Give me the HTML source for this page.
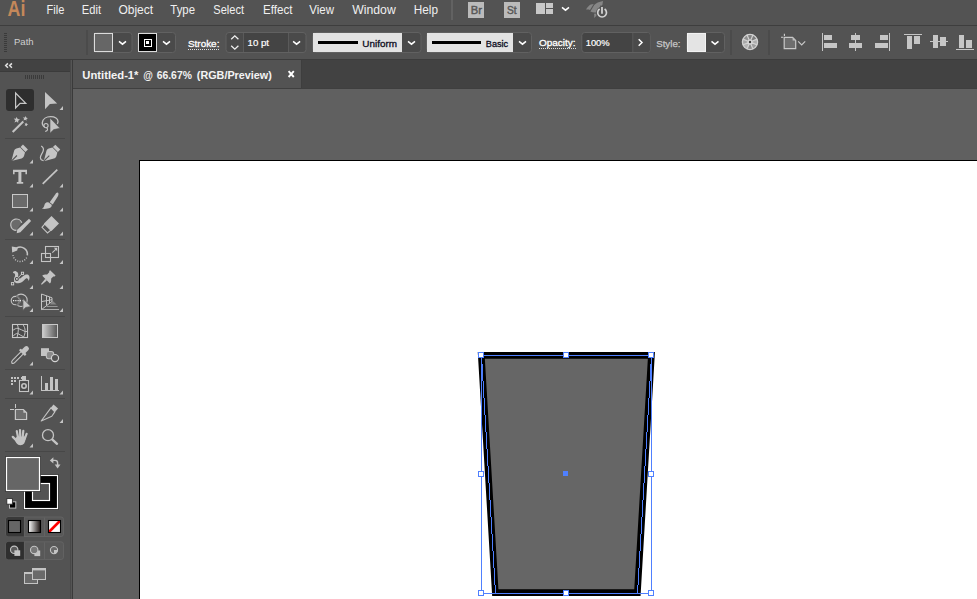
<!DOCTYPE html>
<html>
<head>
<meta charset="utf-8">
<title>Untitled-1* @ 66.67% (RGB/Preview)</title>
<style>
html,body{margin:0;padding:0;background:#535353;overflow:hidden;}
body{width:977px;height:599px;position:relative;font-family:"Liberation Sans",sans-serif;}
svg{position:absolute;left:0;top:0;display:block;}
text{font-family:"Liberation Sans",sans-serif;}
</style>
</head>
<body>
<svg width="977" height="599" viewBox="0 0 977 599">
<defs>
  <path id="tri" d="M3.5 0V4H0Z" fill="#c4c4c4"/>
  <path id="chev" d="M-3.5 -1.1L0 1.7L3.5 -1.1" fill="none" stroke="#ffffff" stroke-width="1.5"/>
  <linearGradient id="gradTool" x1="0" x2="1" y1="0" y2="0"><stop offset="0" stop-color="#cfcfcf"/><stop offset="1" stop-color="#555555"/></linearGradient>
  <linearGradient id="gradMode" x1="0" x2="1" y1="0" y2="0"><stop offset="0" stop-color="#ffffff"/><stop offset="1" stop-color="#1a1210"/></linearGradient>
</defs>

<!-- ===== BACKGROUNDS ===== -->
<g id="bg" shape-rendering="crispEdges">
  <rect x="0" y="0" width="977" height="599" fill="#535353"/>
  <!-- menu/control separator -->
  <rect x="0" y="25" width="977" height="1" fill="#3e3e3e"/>
  <!-- line under control bar -->
  <rect x="0" y="59" width="977" height="1" fill="#3c3c3c"/>
  <!-- canvas -->
  <rect x="73" y="89" width="904" height="510" fill="#606060"/>
  <!-- tab strip -->
  <rect x="73" y="60" width="904" height="28" fill="#424242"/>
  <rect x="73" y="60" width="228" height="28" fill="#535353"/>
  <rect x="73" y="88" width="904" height="1" fill="#3f3f3f"/>
  <!-- toolbar right edge -->
  <rect x="70" y="60" width="1" height="539" fill="#484848"/>
  <rect x="71" y="60" width="1" height="539" fill="#555555"/>
  <rect x="72" y="60" width="1" height="539" fill="#3a3a3a"/>
  <!-- toolbar header -->
  <rect x="0" y="60" width="70" height="11" fill="#424242"/>
  <rect x="0" y="71" width="70" height="1" fill="#3b3b3b"/>
  <!-- artboard -->
  <rect x="139" y="160" width="838" height="439" fill="#000000"/>
  <rect x="140" y="161" width="837" height="438" fill="#ffffff"/>
</g>

<!-- ===== MENU BAR ===== -->
<g id="menubar">
  <text x="7.6" y="16" font-size="22.5" font-weight="bold" fill="#c4885a" textLength="17.8" lengthAdjust="spacingAndGlyphs">Ai</text>
  <g font-size="12" fill="#f0f0f0">
    <text x="46.5" y="13.5" textLength="17.8" lengthAdjust="spacingAndGlyphs">File</text>
    <text x="81.8" y="13.5" textLength="19.2" lengthAdjust="spacingAndGlyphs">Edit</text>
    <text x="118.4" y="13.5" textLength="34.7" lengthAdjust="spacingAndGlyphs">Object</text>
    <text x="170.3" y="13.5" textLength="24.7" lengthAdjust="spacingAndGlyphs">Type</text>
    <text x="213.3" y="13.5" textLength="30.8" lengthAdjust="spacingAndGlyphs">Select</text>
    <text x="263" y="13.5" textLength="29.5" lengthAdjust="spacingAndGlyphs">Effect</text>
    <text x="309.3" y="13.5" textLength="24.7" lengthAdjust="spacingAndGlyphs">View</text>
    <text x="352.3" y="13.5" textLength="43.4" lengthAdjust="spacingAndGlyphs">Window</text>
    <text x="413.8" y="13.5" textLength="24.2" lengthAdjust="spacingAndGlyphs">Help</text>
  </g>
  <rect x="451" y="0" width="2" height="20" fill="#626262" shape-rendering="crispEdges"/>
  <!-- Br -->
  <rect x="468" y="2" width="16" height="16" fill="#bbbbbb" shape-rendering="crispEdges"/>
  <text x="470.7" y="14" font-size="11" fill="#575757" stroke="#575757" stroke-width="0.45" textLength="11.2" lengthAdjust="spacingAndGlyphs">Br</text>
  <!-- St -->
  <rect x="504" y="2" width="16" height="16" fill="#bbbbbb" shape-rendering="crispEdges"/>
  <text x="506.9" y="14" font-size="11" fill="#575757" stroke="#575757" stroke-width="0.45" textLength="9.6" lengthAdjust="spacingAndGlyphs">St</text>
  <!-- workspace -->
  <g fill="#c8c8c8" shape-rendering="crispEdges">
    <rect x="536" y="3" width="9" height="11"/>
    <rect x="546" y="3" width="7" height="5"/>
    <rect x="546" y="9" width="7" height="5"/>
  </g>
  <use href="#chev" x="565.5" y="8.5"/>
  <!-- rocket / gpu -->
  <g>
    <path d="M603 0.9C599 1.6 596 3 594.2 5L590.4 11.6C592.4 12.6 594.6 12.8 596.8 12.4C600.6 9.6 602.8 5.6 603 0.9Z" fill="#868686"/>
    <path d="M586 9.6C587.6 7 589 5.4 590.8 4.5L593.7 4.1L590 9.9C588.6 9.4 587.4 9.4 586 9.6Z" fill="#868686"/>
    <path d="M594.1 13.7L596.7 13.4C596.8 14.4 596.6 15.2 596.3 16L593.9 18.1C594.4 16.6 594.4 15.2 594.1 13.7Z" fill="#868686"/>
    <circle cx="602.1" cy="12.7" r="6.1" fill="#535353"/>
    <path d="M602 5.6V14.6" stroke="#535353" stroke-width="3.8"/>
    <path d="M599.6 9A4.4 4.4 0 1 0 604.6 9" fill="none" stroke="#d2d2d2" stroke-width="1.7"/>
    <path d="M602 7.1V13.8" stroke="#d2d2d2" stroke-width="1.8"/>
  </g>
</g>

<!-- ===== CONTROL BAR ===== -->
<g id="controlbar">
  <!-- grip -->
  <g fill="#3a3a3a" shape-rendering="crispEdges">
    <rect x="4" y="33" width="3" height="1"/><rect x="4" y="35" width="3" height="1"/><rect x="4" y="37" width="3" height="1"/>
    <rect x="4" y="39" width="3" height="1"/><rect x="4" y="41" width="3" height="1"/><rect x="4" y="43" width="3" height="1"/>
    <rect x="4" y="45" width="3" height="1"/><rect x="4" y="47" width="3" height="1"/><rect x="4" y="49" width="3" height="1"/>
    <rect x="4" y="51" width="3" height="1"/>
  </g>
  <text x="14" y="44.8" font-size="9.6" fill="#d0d0d0" textLength="19.6" lengthAdjust="spacingAndGlyphs">Path</text>
  <rect x="86" y="30" width="2" height="25" fill="#4b4b4b" shape-rendering="crispEdges"/>

  <!-- fill swatch + dropdown -->
  <rect x="93.5" y="32.5" width="38.5" height="20" rx="3" fill="#4a4a4a" stroke="#616161" stroke-width="1"/>
  <rect x="94.5" y="33.5" width="18" height="18" fill="#666666" stroke="#dcdcdc" stroke-width="1"/>
  <use href="#chev" x="122.5" y="42.5"/>

  <!-- stroke swatch + dropdown -->
  <rect x="138.0" y="32.5" width="37.5" height="20" rx="3" fill="#4a4a4a" stroke="#616161" stroke-width="1"/>
  <rect x="138.5" y="33.5" width="18" height="18" fill="#000000" stroke="#dcdcdc" stroke-width="1"/>
  <rect x="144" y="39" width="7" height="7" fill="none" stroke="#ffffff" stroke-width="1" shape-rendering="crispEdges"/>
  <rect x="146" y="41" width="3" height="3" fill="#ffffff" shape-rendering="crispEdges"/>
  <use href="#chev" x="166.5" y="42.5"/>

  <!-- Stroke label -->
  <text x="188" y="47" font-size="9.7" fill="#ffffff" stroke="#ffffff" stroke-width="0.3" textLength="31.4" lengthAdjust="spacingAndGlyphs">Stroke:</text>
  <path d="M188 49.5H220" stroke="#e0e0e0" stroke-width="1" stroke-dasharray="1 1" shape-rendering="crispEdges"/>

  <!-- stroke weight spinner/field/dropdown -->
  <rect x="226" y="32.5" width="80" height="20" rx="3" fill="#4a4a4a" stroke="#616161" stroke-width="1"/>
  <rect x="244" y="33" width="44.5" height="19" fill="#444444"/>
  <path d="M243.5 33V52M288.5 33V52" stroke="#5c5c5c" stroke-width="0.9"/>
  <path d="M231.2 39.2L234.8 35.8L238.4 39.2M231.2 45.8L234.8 49.2L238.4 45.8" fill="none" stroke="#f0f0f0" stroke-width="1.3"/>
  <text x="247.5" y="46" font-size="9.7" fill="#ffffff" stroke="#ffffff" stroke-width="0.2" textLength="21.5" lengthAdjust="spacingAndGlyphs">10 pt</text>
  <use href="#chev" x="296.6" y="42.5"/>

  <!-- Uniform -->
  <rect x="312.5" y="32.5" width="108.5" height="20" rx="3" fill="#4a4a4a" stroke="#616161" stroke-width="1"/>
  <rect x="313" y="33" width="89" height="19" fill="#e3e3e3" shape-rendering="crispEdges"/>
  <rect x="318" y="41" width="40" height="3" fill="#000000" shape-rendering="crispEdges"/>
  <text x="362.3" y="47" font-size="9.7" fill="#0c0c1c" stroke="#0c0c1c" stroke-width="0.3" textLength="34.7" lengthAdjust="spacingAndGlyphs">Uniform</text>
  <use href="#chev" x="411.5" y="42.5"/>

  <!-- Basic -->
  <rect x="426.5" y="32.5" width="105" height="20" rx="3" fill="#4a4a4a" stroke="#616161" stroke-width="1"/>
  <rect x="427" y="33" width="86" height="19" fill="#e3e3e3" shape-rendering="crispEdges"/>
  <rect x="432" y="41" width="49" height="3" fill="#000000" shape-rendering="crispEdges"/>
  <text x="485.8" y="47" font-size="9.7" fill="#0c0c1c" stroke="#0c0c1c" stroke-width="0.3" textLength="22.4" lengthAdjust="spacingAndGlyphs">Basic</text>
  <use href="#chev" x="522.5" y="42.5"/>

  <!-- Opacity -->
  <text x="539" y="46" font-size="9.7" fill="#ffffff" stroke="#ffffff" stroke-width="0.3" textLength="36.6" lengthAdjust="spacingAndGlyphs">Opacity:</text>
  <path d="M539 48.5H576" stroke="#e0e0e0" stroke-width="1" stroke-dasharray="1 1" shape-rendering="crispEdges"/>
  <rect x="581.8" y="32.5" width="68.4" height="20" rx="3" fill="#444444" stroke="#616161" stroke-width="1"/>
  <path d="M633 33H647.2A2.5 2.5 0 0 1 649.7 35.5V49.5A2.5 2.5 0 0 1 647.2 52H633Z" fill="#4a4a4a"/>
  <path d="M632.8 33V52" stroke="#5c5c5c" stroke-width="0.9"/>
  <text x="585.7" y="46" font-size="9.7" fill="#ffffff" stroke="#ffffff" stroke-width="0.2" textLength="24" lengthAdjust="spacingAndGlyphs">100%</text>
  <path d="M638.7 39.2L642 42.5L638.7 45.8" fill="none" stroke="#ffffff" stroke-width="1.5"/>

  <!-- Style -->
  <text x="656.2" y="47" font-size="9.7" fill="#c8c8c8" stroke="#c8c8c8" stroke-width="0.25" textLength="24.3" lengthAdjust="spacingAndGlyphs">Style:</text>
  <rect x="686.5" y="32.5" width="38" height="20" rx="3" fill="#4a4a4a" stroke="#616161" stroke-width="1"/>
  <rect x="687.5" y="33.5" width="18" height="18" fill="#e4e4e4" stroke="#f2f2f2" stroke-width="1" shape-rendering="crispEdges"/>
  <use href="#chev" x="715" y="42.5"/>
  <rect x="730" y="30" width="2" height="25" fill="#4b4b4b" shape-rendering="crispEdges"/>

  <!-- recolor wheel -->
  <g>
    <path d="M750 42L757.02 39.09A7.6 7.6 0 0 1 757.02 44.91Z" fill="#adadad"/>
    <path d="M750 42L757.02 44.91A7.6 7.6 0 0 1 752.91 49.02Z" fill="#9c9c9c"/>
    <path d="M750 42L752.91 49.02A7.6 7.6 0 0 1 747.09 49.02Z" fill="#8c8c8c"/>
    <path d="M750 42L747.09 49.02A7.6 7.6 0 0 1 742.98 44.91Z" fill="#b2b2b2"/>
    <path d="M750 42L742.98 44.91A7.6 7.6 0 0 1 742.98 39.09Z" fill="#a6a6a6"/>
    <path d="M750 42L742.98 39.09A7.6 7.6 0 0 1 747.09 34.98Z" fill="#8e8e8e"/>
    <path d="M750 42L747.09 34.98A7.6 7.6 0 0 1 752.91 34.98Z" fill="#808080"/>
    <path d="M750 42L752.91 34.98A7.6 7.6 0 0 1 757.02 39.09Z" fill="#7c7c7c"/>
    <path d="M750 42L757.02 44.91M750 42L752.91 49.02M750 42L747.09 49.02M750 42L742.98 44.91M750 42L742.98 39.09M750 42L747.09 34.98M750 42L752.91 34.98M750 42L757.02 39.09" stroke="#d2d2d2" stroke-width="1.2" fill="none"/>
    <circle cx="750" cy="42" r="7.6" fill="none" stroke="#d2d2d2" stroke-width="1.3"/>
    <circle cx="750" cy="42" r="2.6" fill="#d8d8d8"/>
    <circle cx="750" cy="42" r="1.2" fill="#3c3c3c"/>
  </g>
  <rect x="768" y="30" width="2" height="25" fill="#4b4b4b" shape-rendering="crispEdges"/>

  <!-- document setup / artboard icon -->
  <g>
    <path d="M784.2 37.3H792.6L795.7 40.4V48.6H784.2Z" fill="#6e6e6e" stroke="#c8c8c8" stroke-width="1.2"/>
    <path d="M792.6 37.3V40.4H795.7Z" fill="#c0c0c0"/>
    <path d="M781 37.3H783.2M784.4 33.8V36" stroke="#d0d0d0" stroke-width="1.1"/>
    <path d="M798.2 41.3L801.7 44.8L805.2 41.3" fill="none" stroke="#c8c8c8" stroke-width="1.2"/>
  </g>

  <!-- align icons -->
  <g fill="#c6c6c6" shape-rendering="crispEdges">
    <rect x="822" y="33" width="1" height="18"/><rect x="824" y="35" width="8" height="5"/><rect x="824" y="43" width="13" height="5"/>
    <rect x="855" y="33" width="1" height="18"/><rect x="851" y="35" width="9" height="5"/><rect x="849" y="43" width="13" height="5"/>
    <rect x="889" y="33" width="1" height="18"/><rect x="880" y="35" width="8" height="5"/><rect x="875" y="43" width="13" height="5"/>
    <rect x="904" y="34" width="18" height="1"/><rect x="907" y="36" width="5" height="13"/><rect x="914" y="36" width="6" height="8"/>
    <rect x="930" y="41" width="18" height="1"/><rect x="933" y="35" width="5" height="13"/><rect x="940" y="37" width="6" height="9"/>
    <rect x="956" y="49" width="18" height="1"/><rect x="959" y="35" width="5" height="13"/><rect x="966" y="40" width="6" height="8"/>
  </g>
</g>

<!-- ===== DOCUMENT TAB ===== -->
<g id="tab">
  <rect x="301" y="60" width="1" height="28" fill="#3e3e3e" shape-rendering="crispEdges"/>
  <g font-size="11" font-weight="bold" fill="#f4f4f4">
    <text x="82.3" y="78.8" textLength="56.2" lengthAdjust="spacingAndGlyphs">Untitled-1*</text>
    <text x="143.3" y="78.8" textLength="9.6" lengthAdjust="spacingAndGlyphs">@</text>
    <text x="156.7" y="78.8" textLength="35.2" lengthAdjust="spacingAndGlyphs">66.67%</text>
    <text x="196.8" y="78.8" textLength="75" lengthAdjust="spacingAndGlyphs">(RGB/Preview)</text>
  </g>
  <path d="M288.6 71.2L293.8 77M293.8 71.2L288.6 77" stroke="#ffffff" stroke-width="1.9" fill="none"/>
</g>

<!-- ===== TOOLBAR ===== -->
<g id="toolbar">
  <!-- collapse << -->
  <path d="M7.9 63.4L5.7 65.6L7.9 67.8M11.9 63.4L9.7 65.6L11.9 67.8" fill="none" stroke="#e0e0e0" stroke-width="1.5"/>
  <!-- grip -->
  <g fill="#3a3a3a" shape-rendering="crispEdges">
    <rect x="25" y="75" width="1" height="4"/><rect x="27" y="75" width="1" height="4"/><rect x="29" y="75" width="1" height="4"/>
    <rect x="31" y="75" width="1" height="4"/><rect x="33" y="75" width="1" height="4"/><rect x="35" y="75" width="1" height="4"/>
    <rect x="37" y="75" width="1" height="4"/><rect x="39" y="75" width="1" height="4"/><rect x="41" y="75" width="1" height="4"/>
    <rect x="43" y="75" width="1" height="4"/>
  </g>
  <!-- separators -->
  <g fill="#474747" shape-rendering="crispEdges">
    <rect x="5" y="138" width="60" height="1"/>
    <rect x="5" y="239" width="60" height="1"/>
    <rect x="5" y="316" width="60" height="1"/>
    <rect x="5" y="369" width="60" height="1"/>
    <rect x="5" y="398" width="60" height="1"/>
    <rect x="5" y="451" width="60" height="1"/>
  </g>
  <!-- flyout triangles -->
  <g>
    <use href="#tri" x="59.5" y="106"/>
    <use href="#tri" x="29.5" y="159.5"/>
    <use href="#tri" x="29.5" y="183.5"/><use href="#tri" x="59.5" y="183.5"/>
    <use href="#tri" x="29.5" y="207.5"/><use href="#tri" x="59.5" y="207.5"/>
    <use href="#tri" x="29.5" y="231.5"/><use href="#tri" x="59.5" y="231.5"/>
    <use href="#tri" x="29.5" y="260"/><use href="#tri" x="59.5" y="260"/>
    <use href="#tri" x="29.5" y="285"/><use href="#tri" x="59.5" y="285"/>
    <use href="#tri" x="29.5" y="308"/><use href="#tri" x="59.5" y="308"/>
    <use href="#tri" x="29.5" y="361.5"/>
    <use href="#tri" x="29.5" y="390.5"/><use href="#tri" x="59.5" y="390.5"/>
    <use href="#tri" x="59.5" y="419"/>
    <use href="#tri" x="29.5" y="443.5"/>
  </g>

  <!-- 1 selection (active) -->
  <rect x="6" y="89" width="28" height="22" rx="3" fill="#2e2e2e"/>
  <path d="M15.6 93V108L20.1 103.4H25.8Z" fill="none" stroke="#c8c8c8" stroke-width="1.2" stroke-linejoin="miter"/>
  <!-- 2 direct selection -->
  <path d="M45 92V109.2L49.9 103.9L57.2 103.4Z" fill="#c4c4c4"/>

  <!-- 3 magic wand -->
  <path d="M12.7 132.1L23.3 121.6" stroke="#c4c4c4" stroke-width="2.1"/>
  <g fill="#c4c4c4">
    <path d="M16.4 117L17.8 119L20 119.4L18.2 120.8L18.2 123L16.8 121.6L14.4 122.6L15.4 120.4L13.8 118.6L15.8 118.8Z"/>
    <path d="M25.6 116L26.2 117.6L27.8 118.2L26.4 119.2L26.6 120.8L25.2 119.8L23.4 120.6L24.2 118.8L22.8 117.4L24.8 117.4Z"/>
    <path d="M26 122.6L26.8 123.8L28.2 124.2L27 125L27 126.2L26 125.4L24.6 125.8L25.2 124.6L24.6 123.4L25.8 123.6Z"/>
  </g>
  <!-- 4 lasso + arrow -->
  <path d="M44.6 127C43 126 42.1 124.4 42.3 122.6C42.8 119 46.4 116.7 50.6 116.7C55 116.7 58 118.8 58 121.4C58 122.4 57.7 123.2 57.2 123.8" fill="none" stroke="#c4c4c4" stroke-width="1.3"/>
  <circle cx="46" cy="125.6" r="2.1" fill="none" stroke="#c4c4c4" stroke-width="1.1"/>
  <path d="M46.6 127.8C48.2 129 48 130.6 45.2 131.6" fill="none" stroke="#c4c4c4" stroke-width="1.1"/>
  <path d="M50 118V133.2L53.8 129.6L60 128.3Z" fill="#c4c4c4" stroke="#535353" stroke-width="0.6"/>

  <!-- 5 pen -->
  <g transform="translate(18.65 153.8) rotate(45)" fill="#c4c4c4">
    <rect x="-3.5" y="-9.6" width="7" height="3.4"/>
    <path d="M-3.5 -5.5H3.5L5.4 -2.2C6 -1 5.9 0.2 5.3 1.2L0.5 9.4H-0.5L-5.3 1.2C-5.9 0.2 -6 -1 -5.4 -2.2Z"/>
    <path d="M0 9.6V2.4" stroke="#535353" stroke-width="1.1"/>
  </g>
  <!-- 6 curvature -->
  <g transform="translate(51 153.9) rotate(45)" fill="#c4c4c4">
    <rect x="-3.5" y="-9.6" width="7" height="3.4"/>
    <path d="M-3.5 -5.5H3.5L5.4 -2.2C6 -1 5.9 0.2 5.3 1.2L0.5 9.4H-0.5L-5.3 1.2C-5.9 0.2 -6 -1 -5.4 -2.2Z"/>
    <path d="M0 9.6V2.4" stroke="#535353" stroke-width="1.1"/>
  </g>
  <path d="M41.2 146.1C43.4 147.4 44 149.2 43 151.6C42 154 40.2 155.6 40.4 157.8C40.6 159.6 41.8 160.5 43.6 160.6" fill="none" stroke="#c4c4c4" stroke-width="1.2"/>

  <!-- 7 type -->
  <path d="M13 169.8H27V174.3H25.4V172.1H21.4V182.1H23.2V183.8H16.8V182.1H18.4V172.1H14.6V174.3H13Z" fill="#c4c4c4"/>
  <!-- 8 line -->
  <path d="M42.7 183.8L57.3 169.6" stroke="#c4c4c4" stroke-width="1.7"/>

  <!-- 9 rectangle -->
  <rect x="12.5" y="194.5" width="15" height="13" fill="#6a6a6a" stroke="#c8c8c8" stroke-width="1"/>
  <!-- 10 paintbrush -->
  <path d="M57.6 192.6C58.8 193 58.7 194.8 57.9 196.2L52.7 204.4L49.7 202.2L55.4 194.2C56 193.2 56.8 192.4 57.6 192.6Z" fill="#c4c4c4"/>
  <path d="M48.7 202.5L51.7 204.8C52.3 207.8 48.6 209.3 41.8 208.8C44.4 207.6 44.1 205.4 44.9 203.8C45.7 202.3 47.5 201.8 48.7 202.5Z" fill="#c4c4c4"/>

  <!-- 11 shaper -->
  <path d="M16.4 230.4A5.7 5.7 0 1 1 21.6 222.4L17 229.6Z" fill="#6b6b6b"/>
  <path d="M16.4 230.4A5.7 5.7 0 1 1 21.8 222.8" fill="none" stroke="#c4c4c4" stroke-width="1.2"/>
  <path d="M29 218.8L31.1 221L20.4 232.3L16.7 233.2L17.2 229.8Z" fill="#c4c4c4"/>
  <!-- 12 eraser -->
  <path d="M44.7 224.1L42 227.3L47.5 232.9L50.8 230.2Z" fill="#535353" stroke="#c4c4c4" stroke-width="1.1"/>
  <path d="M51.5 216L59 223.5L51.5 231L44 223.5Z" fill="#c4c4c4"/>

  <!-- 13 rotate -->
  <path d="M16.6 248A7.2 7.2 0 0 1 27.3 255.4" fill="none" stroke="#c4c4c4" stroke-width="1.6"/>
  <path d="M26.6 257.6A7.2 7.2 0 0 1 13 254.6" fill="none" stroke="#c4c4c4" stroke-width="1.3" stroke-dasharray="1 1.45"/>
  <path d="M11.8 246.6L17.8 247.6L17.2 250.4L12.2 252.4Z" fill="#c4c4c4"/>
  <!-- 14 scale -->
  <g fill="none" stroke="#c4c4c4" stroke-width="1.1">
    <rect x="45.5" y="246.5" width="13" height="11"/>
    <rect x="41.5" y="253.5" width="9" height="8"/>
    <path d="M52.3 252.7L56.3 248.8"/>
  </g>
  <path d="M53.8 247.8H57.2V251.2Z" fill="#c4c4c4"/>
</g>
<g id="toolbar2">
  <!-- 15 width tool -->
  <path d="M13 273C13 271.6 14.4 270.8 15.8 271.2C17.8 271.8 18.6 273.4 18.2 275.4C17.8 277.2 17 278.6 17.4 279.8C19.6 279.4 21.4 277.4 23.6 275.8C25.2 274.6 27 274 28.2 274.8C29.8 275.8 30 278.2 28.7 281C28.3 279.2 27.6 278 26.4 278.2C24.8 278.6 23.6 281.4 21.2 282.6C18.6 283.8 15.4 283.4 14.4 281.4C13.6 279.6 14.6 277.6 15 276C15.4 274.6 15 273.2 13 273Z" fill="#c4c4c4"/>
  <path d="M12.6 283.6L22.4 273.4" stroke="#c4c4c4" stroke-width="0.9"/>
  <circle cx="16.9" cy="278.9" r="2.6" fill="#c8c8c8"/>
  <circle cx="16.9" cy="278.9" r="2" fill="#454545"/>
  <circle cx="16.9" cy="278.9" r="0.85" fill="#e8e8e8"/>
  <rect x="11.4" y="282.6" width="2.3" height="2.3" fill="#535353" stroke="#d0d0d0" stroke-width="0.9"/>
  <rect x="21.4" y="272.2" width="2.2" height="2.2" fill="#535353" stroke="#d0d0d0" stroke-width="0.9"/>
  <!-- 16 puppet pin -->
  <g transform="translate(47.05 278.65) rotate(45)" fill="#c4c4c4">
    <path d="M-3.85 -8.2H3.85V-6.9L2.9 -6V-3C3.7 -2 5 -1 5.4 0.2V1.4H-5.4V0.2C-5 -1 -3.7 -2 -2.9 -3V-6L-3.85 -6.9Z"/>
    <path d="M-1.1 1.4H1.1L0.55 8H-0.55Z"/>
  </g>

  <!-- 17 shape builder -->
  <circle cx="21" cy="300.3" r="6.2" fill="none" stroke="#c4c4c4" stroke-width="1.1"/>
  <circle cx="15.4" cy="300.6" r="4.2" fill="#535353" stroke="#c4c4c4" stroke-width="1.1"/>
  <path d="M16.2 296.4A4.2 4.2 0 0 1 16.2 304.8" fill="none" stroke="#535353" stroke-width="1.6"/>
  <path d="M16.2 296.4A4.2 4.2 0 0 1 16.2 304.8" fill="none" stroke="#8c8c8c" stroke-width="0.9"/>
  <path d="M13 300.6H22.6" stroke="#e8e8e8" stroke-width="1.2" stroke-dasharray="1.2 1.05"/>
  <path d="M22.9 298.6V310.4L25.7 307.4L30.9 306.6Z" fill="#c4c4c4" stroke="#535353" stroke-width="0.7"/>
  <!-- 18 perspective grid -->
  <path d="M52.6 300.8L56.6 304.6H50Z" fill="#858585"/>
  <g stroke-width="0.9">
    <path d="M46.8 306.5H57.6" stroke="#9e9e9e"/>
    <path d="M41.5 309.5H59" stroke="#b8b8b8"/>
  </g>
  <g fill="none" stroke="#c4c4c4" stroke-width="1">
    <path d="M41.5 294L52 297.8V301.4L41.5 309.6Z"/>
    <path d="M46.5 295.9V305.6M49.5 297V303.2M41.5 301.6L52 299.7"/>
  </g>

  <!-- 19 mesh -->
  <rect x="12.5" y="324.5" width="15" height="13" fill="#4a4a4a" stroke="#c8c8c8" stroke-width="1.1"/>
  <g fill="none" stroke="#c4c4c4" stroke-width="1">
    <path d="M17.3 324.5C18.7 327.5 18.7 331.5 17 337.4"/>
    <path d="M22.8 324.5C25.7 328 25.9 333 23.4 337.4"/>
    <path d="M12.6 330.6C14.5 329 16 328.3 17.9 328.3C20 329.2 23 330.4 25.2 331.5H27.4"/>
    <path d="M12.8 336.4C14.4 334.6 15.8 333.6 17.6 333.4C19.6 334.6 21.4 335.8 23.6 336.8"/>
  </g>
  <!-- 20 gradient -->
  <rect x="42.5" y="324.5" width="15" height="13" fill="url(#gradTool)" stroke="#c8c8c8" stroke-width="1"/>

  <!-- 21 eyedropper -->
  <g transform="translate(19.85 355.15) rotate(45)">
    <path d="M-1.6 -3V8.6C-1.6 10.2 -0.9 11 0 11.3C0.9 11 1.6 10.2 1.6 8.6V-3" fill="#535353" stroke="#c4c4c4" stroke-width="1.1"/>
    <path d="M0 -1V4" stroke="#454545" stroke-width="1.2"/>
    <rect x="-4.2" y="-5.4" width="8.4" height="2.6" rx="0.8" fill="#c4c4c4"/>
    <rect x="-2.5" y="-11.75" width="5" height="8" rx="2.4" fill="#c4c4c4"/>
  </g>
  <!-- 22 blend -->
  <rect x="41" y="348.2" width="8" height="7.8" fill="#c4c4c4"/>
  <rect x="46.3" y="351.5" width="7.4" height="7.2" rx="2.4" fill="#8a8a8a" stroke="#c4c4c4" stroke-width="1.1"/>
  <circle cx="55" cy="358.1" r="3.6" fill="#535353" stroke="#d4d4d4" stroke-width="1.2"/>

  <!-- 23 symbol sprayer -->
  <g fill="#c4c4c4" shape-rendering="crispEdges">
    <rect x="11" y="377" width="2" height="2"/><rect x="14" y="377" width="2" height="2"/><rect x="17" y="377" width="2" height="2"/>
    <rect x="11" y="380" width="2" height="2"/><rect x="14" y="380" width="2" height="2"/>
    <rect x="11" y="383" width="2" height="2"/>
    <rect x="22" y="376" width="4" height="5"/><rect x="21" y="377" width="2" height="2"/>
  </g>
  <rect x="19.5" y="380.5" width="9" height="11" fill="#4a4a4a" stroke="#c4c4c4" stroke-width="1.1"/>
  <circle cx="24" cy="386" r="2.2" fill="none" stroke="#c4c4c4" stroke-width="1.6"/>
  <!-- 24 column graph -->
  <g fill="#c4c4c4" shape-rendering="crispEdges">
    <rect x="41" y="376" width="1" height="15"/><rect x="41" y="390" width="18" height="1"/>
    <rect x="45" y="383" width="3" height="7"/><rect x="50" y="377" width="3" height="13"/><rect x="55" y="379" width="3" height="11"/>
  </g>

  <!-- 25 artboard -->
  <path d="M15.4 409.5H23.4L26.6 412.7V419.5H15.4Z" fill="#6e6e6e" stroke="#c8c8c8" stroke-width="1.2"/>
  <path d="M23.4 409.5V412.7H26.6Z" fill="#c4c4c4"/>
  <path d="M10 409.5H14.2M15.5 404V408" stroke="#c8c8c8" stroke-width="1.1" shape-rendering="crispEdges"/>
  <!-- 26 slice -->
  <path d="M50.9 407.9L54.8 411.9L51.8 416.2L41.2 421Z" fill="#535353" stroke="#c4c4c4" stroke-width="1.1" stroke-linejoin="round"/>
  <path d="M53.5 404.6L58.1 408.6L55 412L50.8 407.7Z" fill="#c4c4c4"/>

  <!-- 27 hand -->
  <g stroke="#c4c4c4" stroke-width="2.2" stroke-linecap="round" fill="none">
    <path d="M16.8 431.2L18.2 438"/>
    <path d="M20 430L20.3 438"/>
    <path d="M23.3 430.9L22.6 438"/>
    <path d="M26.6 433.8L24.6 439"/>
    <path d="M12.8 436.9L17.4 441.4" stroke-width="2.3"/>
  </g>
  <path d="M16.9 436.5H25.6C25.8 440 25 443.4 22.6 444.8C21.2 445.4 19.4 445.4 18.2 444.8C16.4 443.6 15.4 441.6 14.6 439.4Z" fill="#c4c4c4"/>
  <!-- 28 zoom -->
  <circle cx="48" cy="435.2" r="5.5" fill="none" stroke="#c4c4c4" stroke-width="1.3"/>
  <path d="M52.4 439.7L57 443.8" stroke="#c4c4c4" stroke-width="2.4" stroke-linecap="round"/>

  <!-- fill / stroke swatches -->
  <rect x="23.3" y="474.3" width="35.5" height="35.5" fill="#333333"/>
  <rect x="24.5" y="475.5" width="33" height="33" fill="#000000" stroke="#ffffff" stroke-width="1.15"/>
  <rect x="32.5" y="483.5" width="17" height="17" fill="#535353" stroke="#ffffff" stroke-width="1.15"/>
  <rect x="5.2" y="456.2" width="35.6" height="35.6" fill="#333333"/>
  <rect x="6.5" y="457.5" width="33" height="33" fill="#666666" stroke="#ffffff" stroke-width="1.2"/>
  <!-- swap -->
  <path d="M53 460.4H55C56.7 460.4 57.6 461.4 57.6 463V465" fill="none" stroke="#c4c4c4" stroke-width="1.4"/>
  <path d="M49.8 460.4L53.4 457.3V463.5Z" fill="#c4c4c4"/>
  <path d="M57.6 468.4L54.7 464.6H60.5Z" fill="#c4c4c4"/>
  <!-- default -->
  <rect x="9.5" y="501.8" width="6.3" height="6.3" fill="#000000" stroke="#c0c0c0" stroke-width="1"/>
  <rect x="6.8" y="498.6" width="5.6" height="5.6" fill="#ffffff" stroke="#2e2e2e" stroke-width="0.9"/>

  <!-- colour mode group -->
  <rect x="6" y="517" width="57.5" height="19.5" rx="2.5" fill="#585858" stroke="#666666" stroke-width="0.8"/>
  <path d="M8.5 517H24V536.5H8.5A2.5 2.5 0 0 1 6 534V519.5A2.5 2.5 0 0 1 8.5 517Z" fill="#393939"/>
  <path d="M24.4 517.5V536M44.5 517.5V536" stroke="#666666" stroke-width="0.8"/>
  <rect x="8.5" y="520.5" width="12" height="12" fill="#666666" stroke="#000000" stroke-width="1.1"/>
  <rect x="28.5" y="520.5" width="12" height="12" fill="url(#gradMode)" stroke="#000000" stroke-width="1.1"/>
  <rect x="48.5" y="520.5" width="12" height="12" fill="#ffffff" stroke="#000000" stroke-width="1.1"/>
  <path d="M49 530V532H50.8L60 522.8V521H58Z" fill="#ff0000"/>

  <!-- draw mode group -->
  <rect x="6" y="541.8" width="57.5" height="17.7" rx="2.5" fill="#585858" stroke="#666666" stroke-width="0.8"/>
  <path d="M8.5 541.8H24V559.5H8.5A2.5 2.5 0 0 1 6 557V544.3A2.5 2.5 0 0 1 8.5 541.8Z" fill="#2f2f2f"/>
  <path d="M24.4 542.3V559M44.5 542.3V559" stroke="#666666" stroke-width="0.8"/>
  <circle cx="14.2" cy="549.8" r="3.7" fill="#5a5a5a" stroke="#c4c4c4" stroke-width="1.1"/>
  <rect x="14.4" y="550.3" width="5.8" height="5.6" fill="#c4c4c4"/>
  <rect x="34.4" y="550.5" width="5.8" height="5.6" fill="#c4c4c4"/>
  <circle cx="34.2" cy="549.9" r="3.7" fill="#777777" stroke="#c4c4c4" stroke-width="1.1"/>
  <circle cx="54" cy="550.1" r="3.6" fill="#6a6a6a" stroke="#c4c4c4" stroke-width="1.1"/>
  <path d="M54 550.1H57.6A3.6 3.6 0 0 1 54 553.7Z" fill="#c4c4c4"/>

  <!-- screen mode -->
  <rect x="24.5" y="572.5" width="13" height="11" fill="#6a6a6a" stroke="#c4c4c4" stroke-width="1"/>
  <rect x="24" y="572" width="14" height="2" fill="#c4c4c4"/>
  <rect x="32.5" y="568.5" width="13" height="11" fill="#6a6a6a" stroke="#c4c4c4" stroke-width="1"/>
  <rect x="32" y="568" width="14" height="2.4" fill="#c4c4c4"/>
</g>


<!-- ===== SHAPE ON CANVAS ===== -->
<g id="shape">
  <path d="M481.3 355.3H651.4L637.4 592.6H495.3Z" fill="#666666" stroke="#000000" stroke-width="6.67" stroke-linejoin="miter"/>
  <g shape-rendering="crispEdges" fill="none" stroke="#4f80ff" stroke-width="1">
    <!-- path outline -->
    <path d="M481.5 355.5H651.5L637.5 593.5H495.5Z"/>
    <!-- bounding box -->
    <rect x="481.5" y="355.5" width="170" height="238"/>
  </g>
  <g shape-rendering="crispEdges" fill="#ffffff" stroke="#4f80ff" stroke-width="1">
    <rect x="478.5" y="352.5" width="5" height="5"/>
    <rect x="563.5" y="352.5" width="5" height="5"/>
    <rect x="648.5" y="352.5" width="5" height="5"/>
    <rect x="478.5" y="471.5" width="5" height="5"/>
    <rect x="648.5" y="471.5" width="5" height="5"/>
    <rect x="478.5" y="590.5" width="5" height="5"/>
    <rect x="563.5" y="590.5" width="5" height="5"/>
    <rect x="648.5" y="590.5" width="5" height="5"/>
  </g>
  <rect x="563" y="471" width="5" height="5" fill="#4f80ff" shape-rendering="crispEdges"/>
</g>

</svg>
</body>
</html>
